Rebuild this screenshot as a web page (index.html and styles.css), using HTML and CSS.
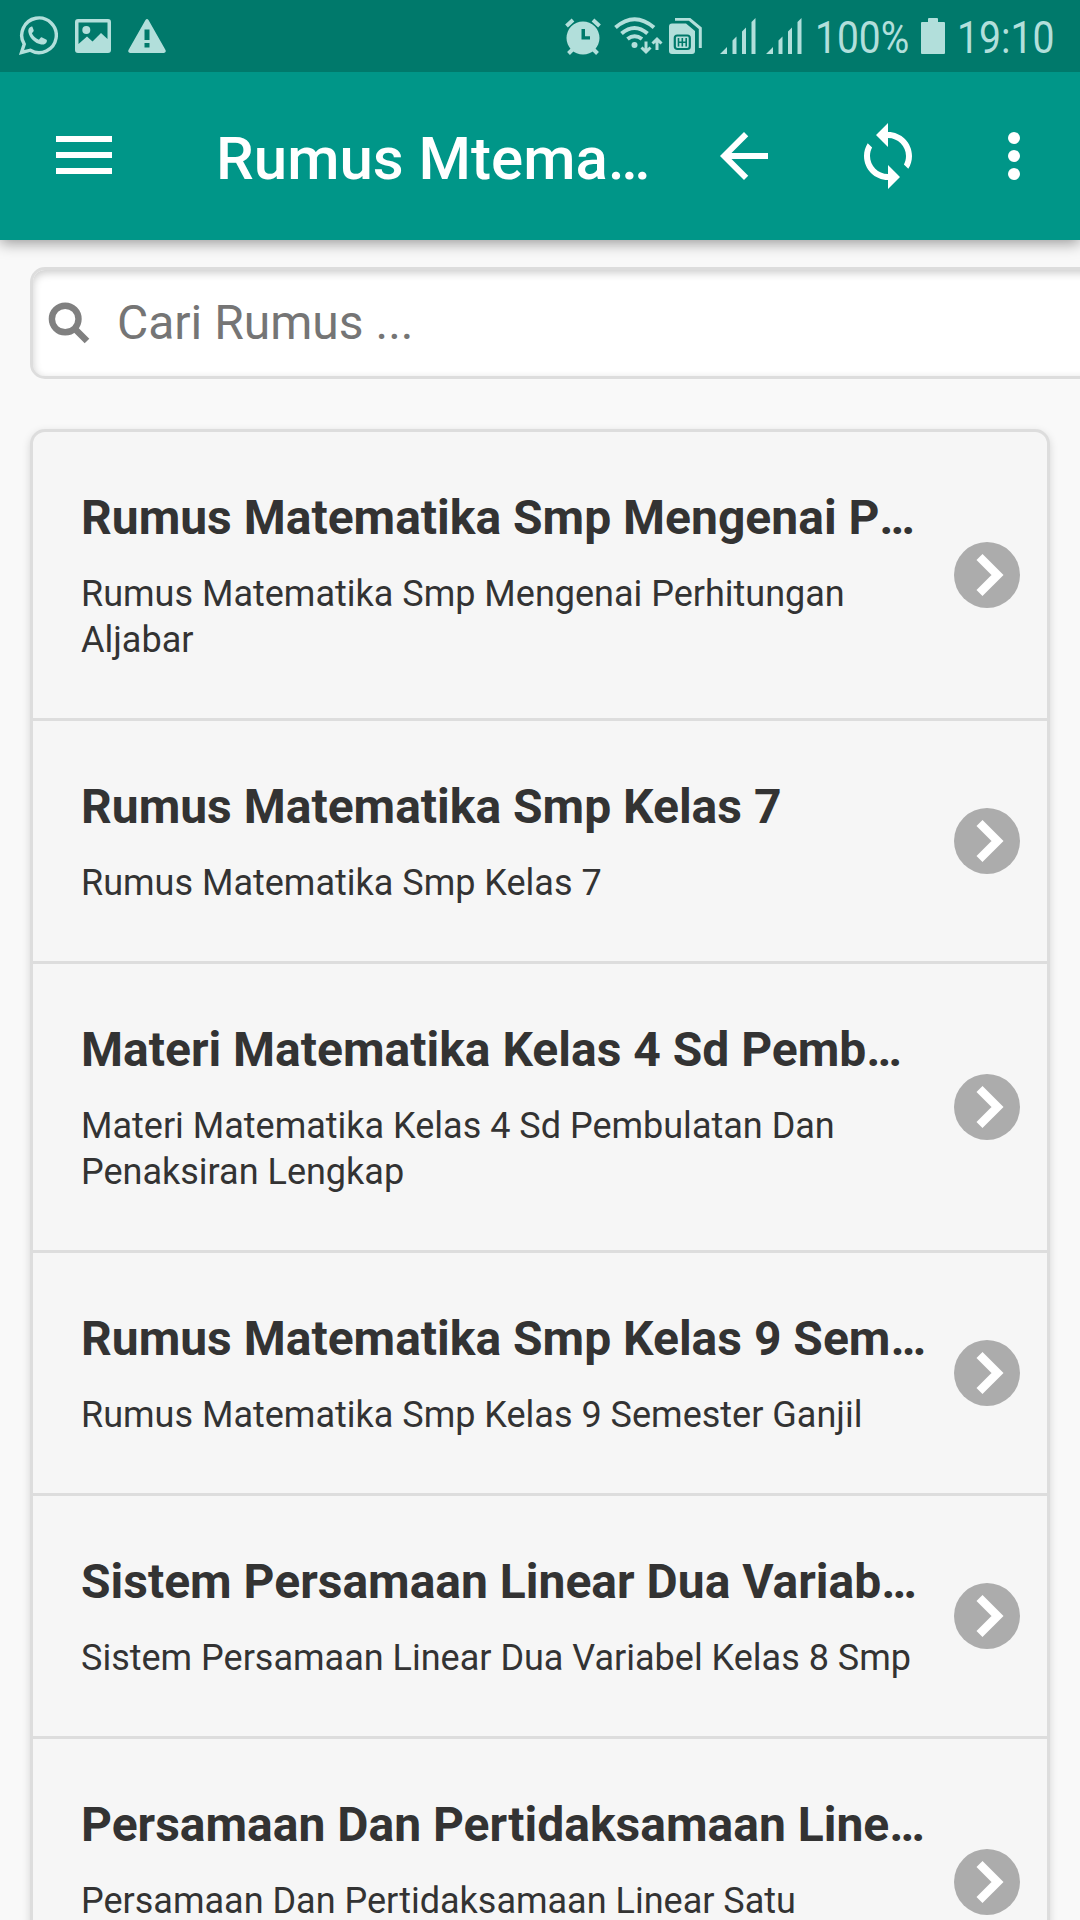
FILE: index.html
```html
<!DOCTYPE html>
<html lang="id">
<head>
    <meta charset="UTF-8">
    <meta name="viewport" content="width=device-width, initial-scale=1.0">
    <title>Rumus Mtematika</title>
    <link rel="stylesheet" href="styles.css">
</head>
<body>
    <div class="status-bar">
        <div class="status-left">
            <svg width="40" height="40" viewBox="0 0 40 40">
                <path d="M3.5 36.5 6.2 28.2A17.3 17.3 0 1 1 12.3 34.2Z" fill="none" stroke="currentColor" stroke-width="3.4"/>
                <path d="M13.5 10.6c-2 .6-3.6 2.6-3.2 5.2 1 6 6.6 11.7 12.9 12.7 2.8.4 5.2-1 5.7-3.3.2-.9-.1-1.4-.8-1.8l-4-1.9c-.8-.3-1.3-.1-1.7.4l-1.5 1.9c-3.3-1.200-5.800-3.700-7-6.500l1.500-1.900c.4-.5.4-1 .2-1.500l-1.100-2.900c-.2-.4-.6-.5-1-.4z" fill="currentColor"/>
            </svg>
            <svg width="36" height="34" viewBox="0 0 36 34">
                <path fill-rule="evenodd" d="M3 0h30a3 3 0 0 1 3 3v28a3 3 0 0 1-3 3H3a3 3 0 0 1-3-3V3a3 3 0 0 1 3-3zM3.5 3.5v21.500L12 17.500l5.500 5L26 14l6.500 6V3.500z" fill="currentColor"/>
                <circle cx="11.3" cy="11" r="4" fill="currentColor"/>
            </svg>
            <svg width="38" height="34" viewBox="0 0 38 34">
                <path fill-rule="evenodd" d="M17.500 1q1.500-2 3 0L37.500 31q1 2.500-1.500 3H2q-2.500-.5-1.500-3zM16.500 10.500v10.500h5V10.500zM16.500 24v4.500h5V24z" fill="currentColor"/>
            </svg>
        </div>
        <div class="status-right">
            <svg width="36" height="37" viewBox="0 0 36 37">
                <path fill-rule="evenodd" d="M18 3.500a16.500 16.500 0 1 1 0 33 16.500 16.500 0 0 1 0-33zM16.500 11v10.500H25V18.200h-5V11z" fill="currentColor"/>
                <path d="M1.500 8 8 2M34.500 8 28 2M3.500 35.500 8 31M32.500 35.500 28 31" fill="none" stroke="currentColor" stroke-width="4"/>
            </svg>
            <svg class="wifi" width="49" height="38" viewBox="0 0 49 38">
                <path d="M1.500 10.500Q20.500-6 40 10.500M7.500 16.500Q20.500 5.500 33.500 16.500M13.500 22Q20.500 16.500 28 22" fill="none" stroke="currentColor" stroke-width="4"/>
                <circle cx="20.500" cy="28" r="3" fill="currentColor"/>
                <path d="M32 24.500v10M27.500 30.500 32 35l4.500-4.500M43 33V23M38.500 26.500 43 22l4.500 4.500" fill="none" stroke="currentColor" stroke-width="3"/>
            </svg>
            <svg class="sim" width="33" height="36" viewBox="0 0 33 36">
                <path d="M6 1.300h14.500l10.800 9V30" fill="none" stroke="currentColor" stroke-width="3"/>
                <path d="M3 5.500h14l9 7.500v20a3 3 0 0 1-3 3H3a3 3 0 0 1-3-3V8.500a3 3 0 0 1 3-3z" fill="currentColor"/>
                <rect x="5.800" y="17.500" width="15" height="13.500" rx="2.500" fill="none" stroke="#00796b" stroke-width="2.200"/>
                <path d="M9.500 20v8.500M13.300 20v8.500M17.200 20v8.500M9.500 24.200h7.700" stroke="#00796b" stroke-width="1.600"/>
            </svg>
            <svg class="signal" width="36" height="36" viewBox="0 0 36 36">
                <path d="M0 36l7-7v7zM12.500 36V22.500l4-4V36zM22 36V13.500l4-4V36zM31.500 36V4l4-4v36z" fill="currentColor"/>
            </svg>
            <svg class="signal-two" width="36" height="36" viewBox="0 0 36 36">
                <path d="M0 36l7-7v7zM12.500 36V22.500l4-4V36zM22 36V13.500l4-4V36zM31.500 36V4l4-4v36z" fill="currentColor"/>
            </svg>
            <span class="percent">100%</span>
            <svg class="battery" width="24" height="36" viewBox="0 0 24 36">
                <path d="M7 1q0-1 1-1h8q1 0 1 1v3h6q1 0 1 1v30q0 1-1 1H1q-1 0-1-1V5q0-1 1-1h6z" fill="currentColor"/>
            </svg>
            <span class="clock">19:10</span>
        </div>
    </div>

    <header class="app-bar">
        <svg class="menu" width="56" height="38" viewBox="0 0 56 38">
            <path d="M0 0h56v6H0zM0 16h56v6H0zM0 32h56v6H0z" fill="currentColor"/>
        </svg>
        <h1>Rumus Mtematika</h1>
        <svg class="back" width="72" height="72" viewBox="0 0 24 24">
            <path d="M20 11H7.830l5.590-5.590L12 4l-8 8 8 8 1.410-1.410L7.830 13H20z" fill="currentColor"/>
        </svg>
        <svg class="refresh" width="72" height="72" viewBox="0 0 24 24">
            <path d="M12 4V1L8 5l4 4V6c3.310 0 6 2.690 6 6 0 1.010-.25 1.970-.7 2.800l1.460 1.460C19.540 15.030 20 13.570 20 12c0-4.420-3.580-8-8-8zm0 14c-3.310 0-6-2.690-6-6 0-1.010.25-1.970.7-2.800L5.240 7.740C4.460 8.970 4 10.430 4 12c0 4.420 3.580 8 8 8v3l4-4-4-4z" fill="currentColor"/>
        </svg>
        <svg class="more" width="72" height="72" viewBox="0 0 24 24">
            <circle cx="12" cy="6" r="2" fill="currentColor"/>
            <circle cx="12" cy="12" r="2" fill="currentColor"/>
            <circle cx="12" cy="18" r="2" fill="currentColor"/>
        </svg>
    </header>

    <main>
        <div class="search">
            <svg width="42" height="42" viewBox="0 0 42 42">
                <circle cx="17.200" cy="17" r="13.300" fill="none" stroke="currentColor" stroke-width="6.400"/>
                <path d="M26 26l13 13" stroke="currentColor" stroke-width="6.500"/>
            </svg>
            <input type="text" placeholder="Cari Rumus ...">
        </div>

        <ul class="list">
            <li>
                <div class="item-text">
                    <h2>Rumus Matematika Smp Mengenai Perhitungan Aljabar</h2>
                    <p>Rumus Matematika Smp Mengenai Perhitungan Aljabar</p>
                </div>
                <svg width="66" height="66" viewBox="0 0 66 66"><circle cx="33" cy="33" r="33"/><path d="M25.500 15 43.500 33 25.500 51"/></svg>
            </li>
            <li>
                <div class="item-text">
                    <h2>Rumus Matematika Smp Kelas 7</h2>
                    <p>Rumus Matematika Smp Kelas 7</p>
                </div>
                <svg width="66" height="66" viewBox="0 0 66 66"><circle cx="33" cy="33" r="33"/><path d="M25.500 15 43.500 33 25.500 51"/></svg>
            </li>
            <li>
                <div class="item-text">
                    <h2>Materi Matematika Kelas 4 Sd Pembulatan Dan Penaksiran Lengkap</h2>
                    <p>Materi Matematika Kelas 4 Sd Pembulatan Dan Penaksiran Lengkap</p>
                </div>
                <svg width="66" height="66" viewBox="0 0 66 66"><circle cx="33" cy="33" r="33"/><path d="M25.500 15 43.500 33 25.500 51"/></svg>
            </li>
            <li>
                <div class="item-text">
                    <h2>Rumus Matematika Smp Kelas 9 Semester Ganjil</h2>
                    <p>Rumus Matematika Smp Kelas 9 Semester Ganjil</p>
                </div>
                <svg width="66" height="66" viewBox="0 0 66 66"><circle cx="33" cy="33" r="33"/><path d="M25.500 15 43.500 33 25.500 51"/></svg>
            </li>
            <li>
                <div class="item-text">
                    <h2>Sistem Persamaan Linear Dua Variabel Kelas 8 Smp</h2>
                    <p>Sistem Persamaan Linear Dua Variabel Kelas 8 Smp</p>
                </div>
                <svg width="66" height="66" viewBox="0 0 66 66"><circle cx="33" cy="33" r="33"/><path d="M25.500 15 43.500 33 25.500 51"/></svg>
            </li>
            <li>
                <div class="item-text">
                    <h2>Persamaan Dan Pertidaksamaan Linear Satu Variabel</h2>
                    <p>Persamaan Dan Pertidaksamaan Linear Satu Variabel</p>
                </div>
                <svg width="66" height="66" viewBox="0 0 66 66"><circle cx="33" cy="33" r="33"/><path d="M25.500 15 43.500 33 25.500 51"/></svg>
            </li>
        </ul>
    </main>
</body>
</html>
```

FILE: styles.css
```css
* {
    box-sizing: border-box;
}
body {
    margin: 0;
    height: 1920px;
    overflow: hidden;
    background: #f9f9f9;
    color: #333;
    font-family: Roboto, sans-serif;
}
svg {
    display: block;
    flex-shrink: 0;
}
.status-bar {
    position: relative;
    z-index: 2;
    display: flex;
    justify-content: space-between;
    height: 72px;
    padding: 0 24px 0 18px;
    background: #00796b;
    color: #b2dfdb;
}
.status-left,
.status-right {
    display: flex;
    align-items: center;
}
.status-left {
    gap: 17px;
}
.wifi {
    margin-left: 13px;
}
.sim {
    margin-left: 6px;
}
.signal {
    margin-left: 18px;
}
.signal-two {
    margin-left: 10px;
}
/* narrow digits */
.percent,
.clock {
    font-size: 45px;
    line-height: 72px;
    padding-top: 3px;
    white-space: nowrap;
    transform-origin: left center;
}
.percent {
    width: 94px;
    margin-left: 13px;
    transform: scaleX(0.865);
}
.battery {
    margin-left: 12px;
}
.clock {
    width: 99px;
    margin-left: 12px;
    transform: scaleX(0.87);
}
.app-bar {
    position: relative;
    display: flex;
    align-items: center;
    height: 168px;
    padding: 0 30px 0 56px;
    background: #009688;
    color: #fff;
    box-shadow: 0 3px 14px rgba(0, 0, 0, 0.4);
}
.menu {
    margin-bottom: 2px;
}
.app-bar h1 {
    width: 444px;
    margin: 0 48px 0 104px;
    padding-top: 5px;
    font-size: 60px;
    font-weight: 500;
    line-height: 72px;
    white-space: nowrap;
    overflow: hidden;
    text-overflow: ellipsis;
}
.refresh {
    margin-left: 72px;
}
.more {
    margin-left: 54px;
}
main {
    padding: 27px 30px 0;
}
.search {
    display: flex;
    align-items: center;
    width: 1100px;
    height: 112px;
    padding: 0 15px;
    background: #fff;
    border: 3px solid #ddd;
    border-radius: 15px;
    box-shadow: inset 0 3px 9px rgba(0, 0, 0, 0.2);
    color: #808080;
}
.search input {
    flex: 1;
    height: 100px;
    margin-left: 27px;
    padding: 0 0 2px;
    border: none;
    background: none;
    font-family: inherit;
    font-size: 48px;
}
.search input::placeholder {
    color: #757575;
}
.list {
    list-style: none;
    margin: 50px 0 0;
    padding: 0;
    border: 3px solid #ddd;
    border-radius: 15px;
    background: #f6f6f6;
    box-shadow: 0 3px 9px rgba(0, 0, 0, 0.15);
}
.list li {
    display: flex;
    align-items: center;
    justify-content: space-between;
    padding: 55px 27px 55px 48px;
    border-bottom: 3px solid #ddd;
}
.item-text {
    width: 846px;
}
.item-text h2 {
    margin: 0 0 22px;
    font-size: 48px;
    font-weight: 700;
    line-height: 62px;
    white-space: nowrap;
    overflow: hidden;
    text-overflow: ellipsis;
}
.item-text p {
    width: 840px;
    margin: 0;
    font-size: 36px;
    line-height: 46px;
}
.list circle {
    fill: #acacac;
}
.list path {
    fill: none;
    stroke: #fff;
    stroke-width: 8.5;
}
```
